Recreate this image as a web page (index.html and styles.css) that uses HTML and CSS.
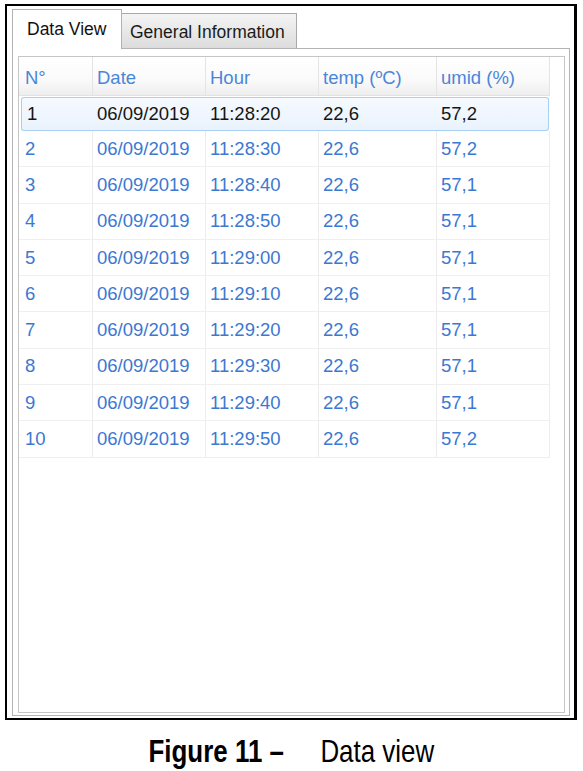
FILE: index.html
```html
<!DOCTYPE html>
<html>
<head>
<meta charset="utf-8">
<link rel="stylesheet" href="styles.css">
</head>
<body>
<div class="frame">
  <div class="tabs">
    <div class="tab active">Data View</div>
    <div class="tab inactive">General Information</div>
  </div>
  <div class="panel">
    <div class="grid">
      <div class="row head">
        <div class="cell c1">N°</div>
        <div class="cell">Date</div>
        <div class="cell">Hour</div>
        <div class="cell">temp (ºC)</div>
        <div class="cell">umid (%)</div>
      </div>
      <div class="row selected">
        <div class="cell c1">1</div><div class="cell">06/09/2019</div><div class="cell">11:28:20</div><div class="cell">22,6</div><div class="cell">57,2</div>
      </div>
      <div class="row">
        <div class="cell c1">2</div><div class="cell">06/09/2019</div><div class="cell">11:28:30</div><div class="cell">22,6</div><div class="cell">57,2</div>
      </div>
      <div class="row">
        <div class="cell c1">3</div><div class="cell">06/09/2019</div><div class="cell">11:28:40</div><div class="cell">22,6</div><div class="cell">57,1</div>
      </div>
      <div class="row">
        <div class="cell c1">4</div><div class="cell">06/09/2019</div><div class="cell">11:28:50</div><div class="cell">22,6</div><div class="cell">57,1</div>
      </div>
      <div class="row">
        <div class="cell c1">5</div><div class="cell">06/09/2019</div><div class="cell">11:29:00</div><div class="cell">22,6</div><div class="cell">57,1</div>
      </div>
      <div class="row">
        <div class="cell c1">6</div><div class="cell">06/09/2019</div><div class="cell">11:29:10</div><div class="cell">22,6</div><div class="cell">57,1</div>
      </div>
      <div class="row">
        <div class="cell c1">7</div><div class="cell">06/09/2019</div><div class="cell">11:29:20</div><div class="cell">22,6</div><div class="cell">57,1</div>
      </div>
      <div class="row">
        <div class="cell c1">8</div><div class="cell">06/09/2019</div><div class="cell">11:29:30</div><div class="cell">22,6</div><div class="cell">57,1</div>
      </div>
      <div class="row">
        <div class="cell c1">9</div><div class="cell">06/09/2019</div><div class="cell">11:29:40</div><div class="cell">22,6</div><div class="cell">57,1</div>
      </div>
      <div class="row">
        <div class="cell c1">10</div><div class="cell">06/09/2019</div><div class="cell">11:29:50</div><div class="cell">22,6</div><div class="cell">57,2</div>
      </div>
    </div>
  </div>
</div>
<div class="caption">
  <span class="cap-inner"><span class="cap-bold">Figure 11 –</span><span class="cap-reg">Data view</span></span>
</div>
</body>
</html>
```
FILE: styles.css
```css
* { box-sizing: border-box; }
html, body { margin: 0; padding: 0; background: #fff; }
body {
  width: 583px;
  height: 771px;
  overflow: hidden;
  font-family: "Liberation Sans", Arial, sans-serif;
}
.frame {
  margin: 4px 6px 0 5px;
  height: 716px;
  border: 2px solid #000;
  border-right-width: 3px;
  padding: 3px 4px 2px 5px;
  display: flex;
  flex-direction: column;
}
.tabs {
  display: flex;
  align-items: flex-end;
  height: 39px;
}
.tab {
  font-size: 17.5px;
  color: #111;
  white-space: nowrap;
}
.tab.active {
  width: 110px;
  height: 40px;
  margin-bottom: -1px;
  border: 1px solid #b2b2b2;
  border-bottom: none;
  background: #fff;
  padding: 9px 0 0 14px;
  position: relative;
  z-index: 1;
}
.tab.inactive {
  width: 175px;
  height: 35px;
  border: 1px solid #a8a8a8;
  border-left: none;
  border-bottom: none;
  background: linear-gradient(#f4f4f4, #dcdcdc);
  padding: 8px 0 0 8px;
  color: #1a1a1a;
}
.panel {
  flex: 1;
  border: 1px solid #b4b4b4;
  padding: 7px 4px 2px 5px;
  display: flex;
}
.grid {
  flex: 1;
  border: 1px solid #c6c6c6;
  background: #fff;
}
.row {
  display: grid;
  grid-template-columns: 74px 113px 113px 118px 113px;
  height: 36.3px;
  align-items: stretch;
  border-bottom: 1px solid #efefef;
  width: 531px;
}
.cell {
  font-size: 18.5px;
  color: #3b78d2;
  padding-left: 4px;
  display: flex;
  align-items: center;
  border-right: 1px solid #ececec;
  white-space: nowrap;
}
.cell.c1 { padding-left: 6px; }
.row.head {
  height: 39px;
  background: linear-gradient(#ffffff 0%, #fafafa 60%, #eeeeee 100%);
  border-bottom: 1px solid #e2e2e2;
}
.row.head .cell {
  color: #4a86da;
  padding-top: 3px;
  border-right: 1px solid #e4e4e4;
}
.row.selected {
  grid-template-columns: 72px 113px 113px 118px 112px;
  background: linear-gradient(#f6faff, #e9f2fc);
  box-shadow: inset 0 0 0 1px #a9cff3;
  border-radius: 3px;
  margin: 1px 0 0 2px;
  width: 528px;
  height: 34px;
  border-bottom: none;
}
.row.selected .cell {
  color: #151515;
  border-right-color: transparent;
}
.caption {
  margin-top: 11px;
  text-align: center;
  font-size: 32px;
  line-height: 40px;
  color: #000;
  white-space: nowrap;
}
.cap-inner {
  display: inline-block;
  transform: scaleX(0.81);
  transform-origin: center;
}
.cap-bold { font-weight: bold; margin-right: 45px; }
.cap-reg { font-weight: normal; }
```
